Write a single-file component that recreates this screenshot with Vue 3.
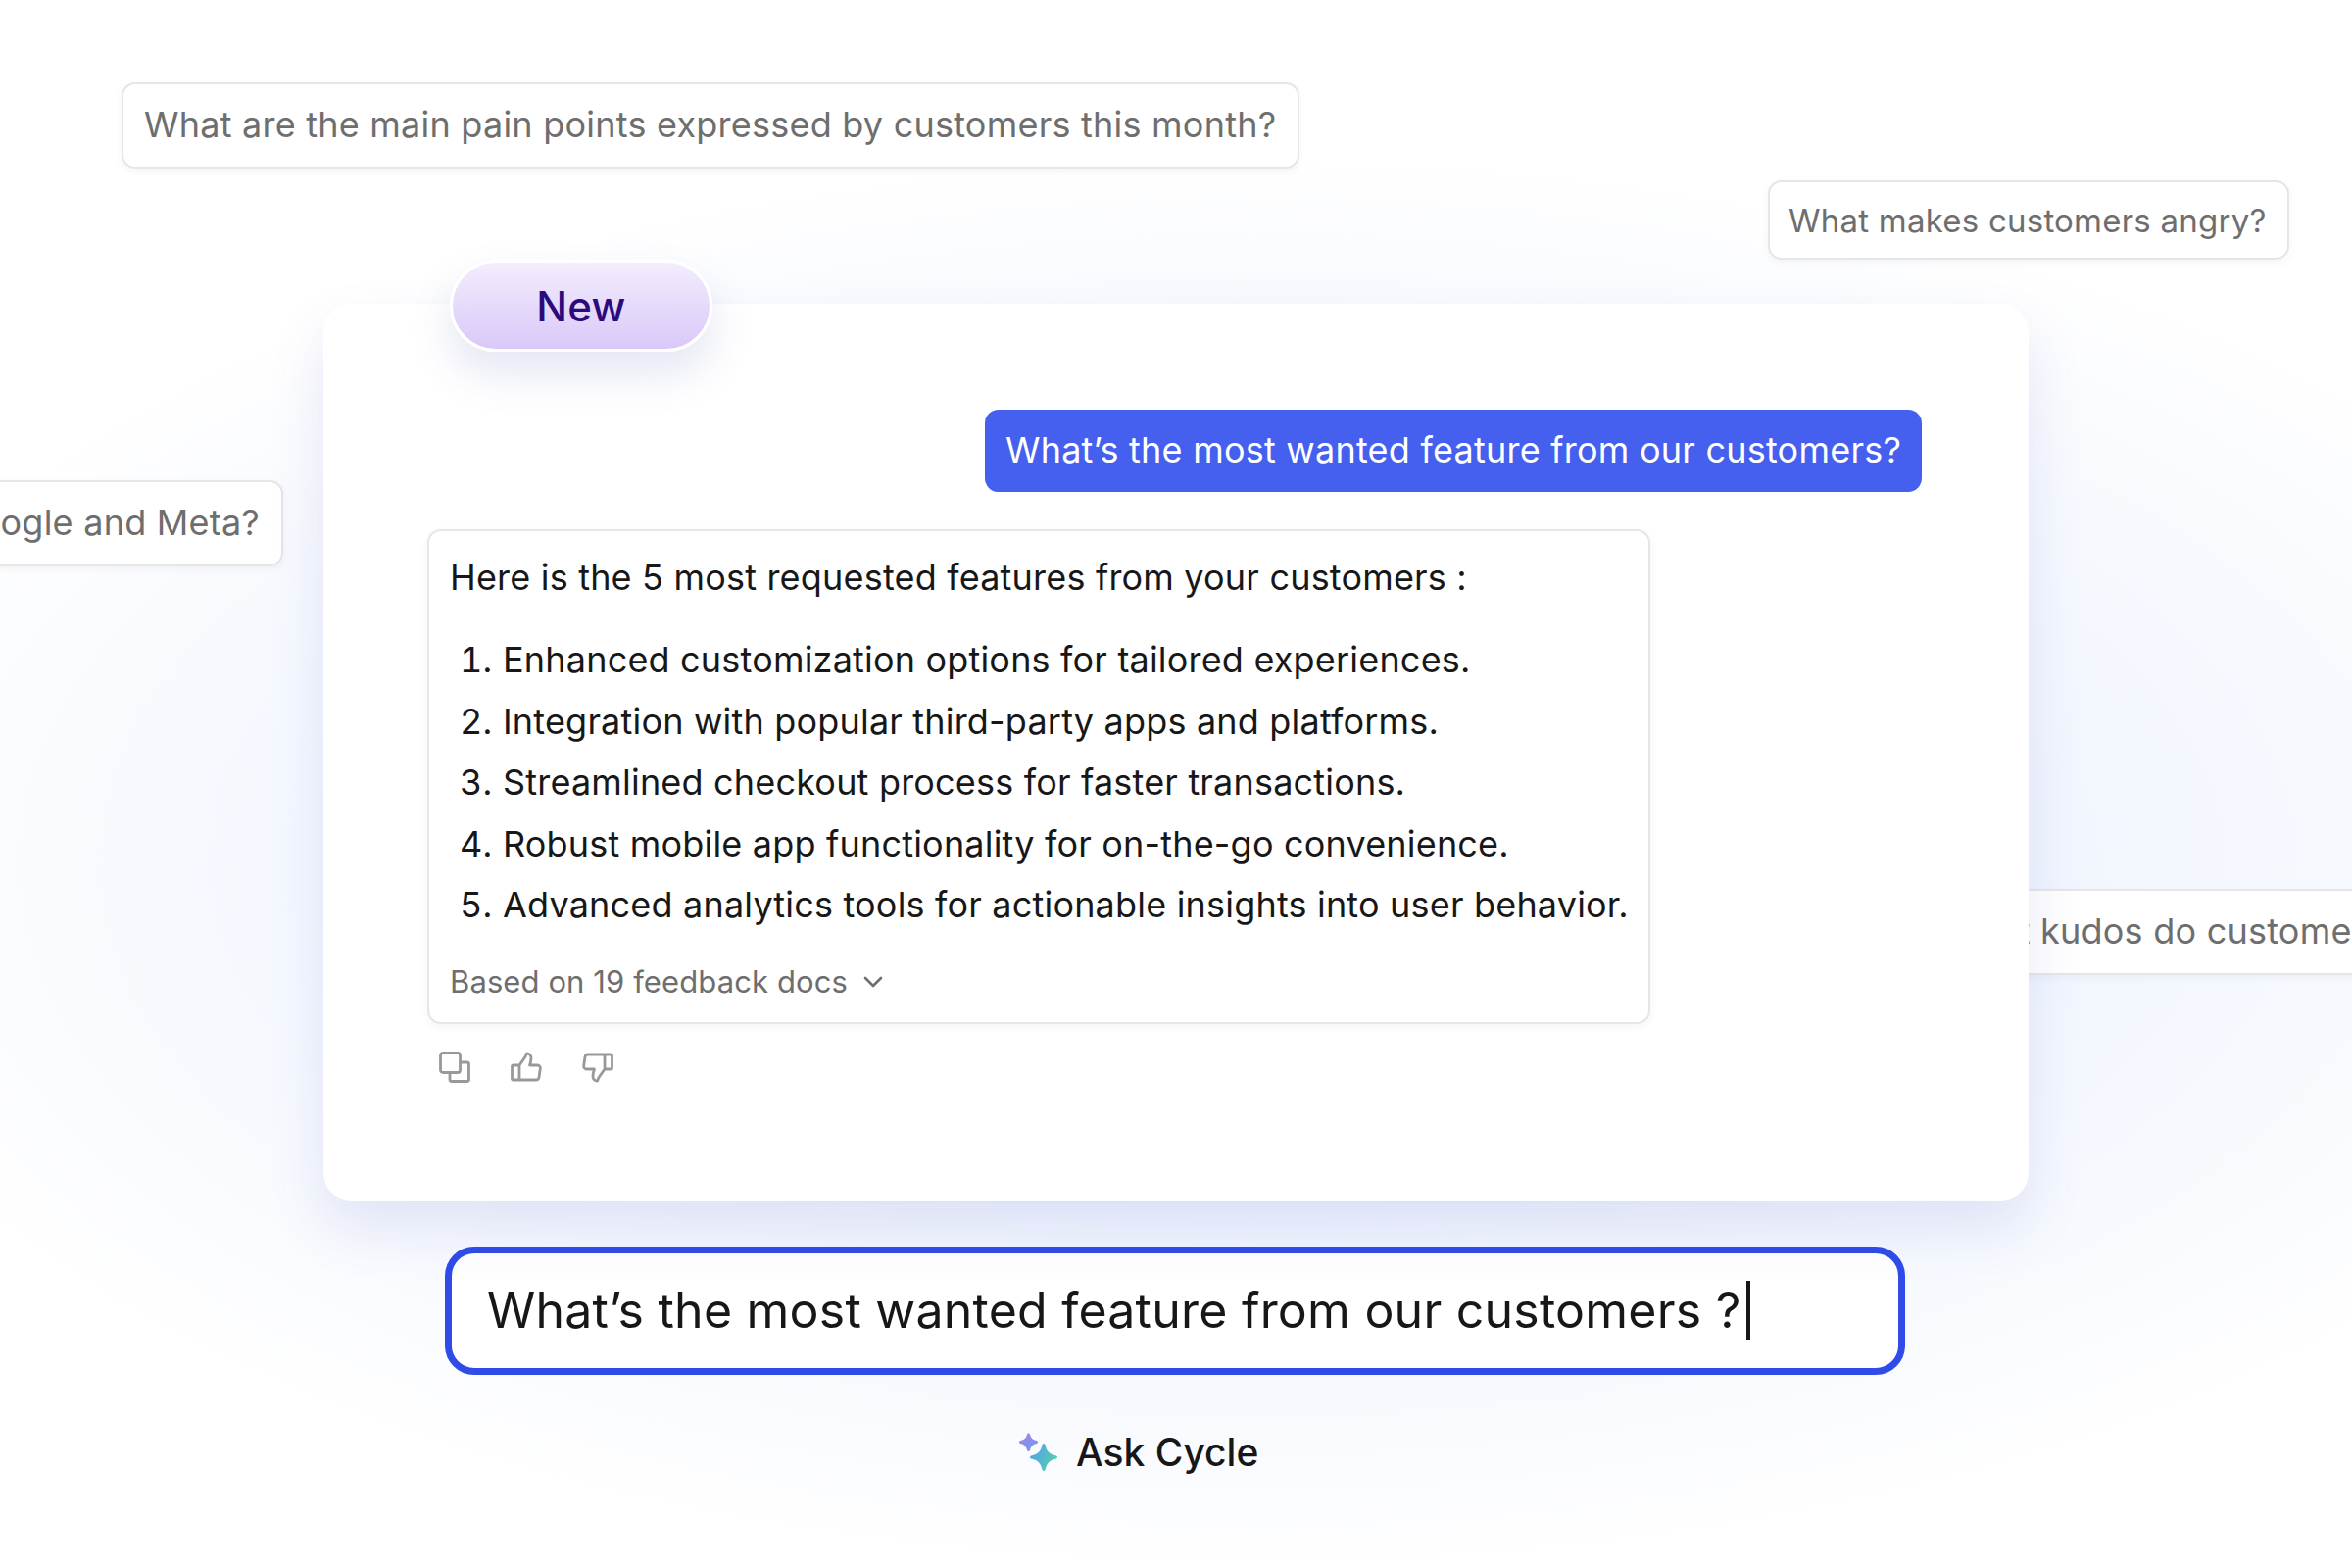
<script setup>
const features = [
  'Enhanced customization options for tailored experiences.',
  'Integration with popular third-party apps and platforms.',
  'Streamlined checkout process for faster transactions.',
  'Robust mobile app functionality for on-the-go convenience.',
  'Advanced analytics tools for actionable insights into user behavior.',
]
</script>

<template>
  <div class="stage">
    <div class="glow"></div>
    <div class="chip chip-a">What are the main pain points expressed by customers this month?</div>
    <div class="chip chip-b">What makes customers angry?</div>
    <div class="chip chip-c"><span>What do customers say about Google and Meta?</span></div>
    <div class="chip chip-d">What kudos do customers give us?</div>

    <main class="column">
      <section class="card">
        <div class="pill">New</div>
        <div class="question"><span>What’s the most wanted feature from our customers?</span></div>
        <div class="answer">
          <p class="lead">Here is the 5 most requested features from your customers :</p>
          <ol class="list">
            <li v-for="(item, i) in features" :key="i">
              <span class="num">{{ i + 1 }}.</span><span>{{ item }}</span>
            </li>
          </ol>
          <div class="source">
            Based on 19 feedback docs
            <svg class="chev" viewBox="0 0 20 12" width="20" height="12" fill="none" stroke="#6f6f6f" stroke-width="2.600" stroke-linecap="round" stroke-linejoin="round"><path d="M2 2l8 8 8-8"/></svg>
          </div>
        </div>
        <div class="actions">
          <svg viewBox="0 0 32 32" width="32" height="32" fill="none" stroke="#999" stroke-width="2.800" stroke-linejoin="round"><rect x="1.500" y="1.500" width="20" height="20" rx="2.500"/><path d="M21.500 11h7a2 2 0 0 1 2 2v15.500a2 2 0 0 1-2 2H13a2 2 0 0 1-2-2v-7"/></svg>
          <svg viewBox="0 0 32 32" width="32" height="32" fill="none" stroke="#999" stroke-width="2.800" stroke-linejoin="round" stroke-linecap="round"><path d="M9 14v15H3a1.500 1.500 0 0 1-1.500-1.500v-12A1.500 1.500 0 0 1 3 14h6zM9 14l6-8.500 1.500-3.500c2.500 0 4.500 2 4.500 4.500 0 2.500-.5 5-1.500 7.500h8c2 0 3 1.500 2.800 3.500l-1.300 9c-.3 1.500-1.300 2.500-3 2.500H9"/></svg>
          <svg viewBox="0 0 32 32" width="32" height="32" fill="none" stroke="#999" stroke-width="2.800" stroke-linejoin="round" stroke-linecap="round"><path d="M23 18V3h6a1.500 1.500 0 0 1 1.500 1.500v12A1.500 1.500 0 0 1 29 18h-6zM23 18l-6 8.500L15.500 30c-2.500 0-4.500-2-4.500-4.500 0-2.500.5-5 1.500-7.500h-8c-2 0-3-1.500-2.800-3.500l1.300-9C3.300 4 4.300 3 6 3h17"/></svg>
        </div>
      </section>

      <div class="input"><span>What’s the most wanted feature from our customers ?</span><i class="caret"></i></div>

      <div class="ask">
        <svg viewBox="0 0 44 44" width="44" height="44">
          <defs>
            <linearGradient id="sparkle-small" x1="0" y1="0" x2="1" y2="1"><stop offset="0" stop-color="#a184ee"/><stop offset="1" stop-color="#6f9be6"/></linearGradient>
            <linearGradient id="sparkle-big" x1="0" y1="0.3" x2="1" y2="0.7"><stop offset="0" stop-color="#54a3e4"/><stop offset="1" stop-color="#56d0ae"/></linearGradient>
          </defs>
          <path fill="url(#sparkle-small)" stroke="url(#sparkle-small)" stroke-width="3" stroke-linejoin="round" d="M13.500 4Q14.800 10.200 21.500 11.500Q14.800 12.800 13.500 19.500Q12.200 12.800 5.500 11.500Q12.200 10.200 13.500 4z"/>
          <path fill="url(#sparkle-big)" stroke="url(#sparkle-big)" stroke-width="3" stroke-linejoin="round" d="M29 14.500Q30.800 25.200 41.500 27Q30.800 28.800 29 39.500Q27.200 28.800 16.500 27Q27.200 25.200 29 14.500z"/>
        </svg>
        <span>Ask Cycle</span>
      </div>
    </main>
  </div>
</template>

<style>
html, body { margin: 0; background: #fff; }
</style>

<style scoped>
.stage {
  position: relative;
  width: 2400px;
  height: 1600px;
  overflow: hidden;
  background: #fff;
  font-family: Inter, "Noto Sans", sans-serif;
  letter-spacing: 0.23px;
  color: #171717;
}
.glow {
  position: absolute;
  left: 0;
  top: 0;
  width: 2400px;
  height: 1600px;
  background: radial-gradient(ellipse 1500px 720px at 1280px 880px, #e8eefc 0%, #f0f5fe 50%, #f8fafe 80%, #ffffff 100%);
}
.chip {
  position: absolute;
  box-sizing: border-box;
  display: flex;
  align-items: center;
  padding: 0 22px 2px 21px;
  background: #fff;
  border: 2px solid #e6e6e8;
  border-radius: 14px;
  color: #6e6e6e;
  white-space: nowrap;
  box-shadow: 0 3px 8px rgba(40, 50, 90, 0.05);
}
.chip-a { left: 124px; top: 84px; height: 88px; font-size: 36px; }
.chip-b { left: 1804px; top: 184px; height: 81px; padding: 0 21px 0 19px; font-size: 33px; }
.chip-c { right: 2111px; top: 490px; height: 88px; font-size: 36px; }
.chip-d { left: 1959px; top: 907px; height: 88px; font-size: 36px; }

.column {
  position: relative;
  display: flex;
  flex-direction: column;
  padding: 310px 0 0 330px;
}
.card {
  position: relative;
  box-sizing: border-box;
  width: 1740px;
  height: 915px;
  padding: 108px 0 0 106px;
  background: #fff;
  border-radius: 28px;
  box-shadow: 0 28px 56px rgba(90, 100, 200, 0.14);
}
.pill {
  position: absolute;
  left: 129px;
  top: -45px;
  box-sizing: border-box;
  width: 268px;
  height: 94px;
  display: flex;
  align-items: center;
  justify-content: center;
  border: 3px solid #fff;
  border-radius: 47px;
  background: linear-gradient(180deg, #f3edfd 0%, #d9c8f8 100%);
  color: #2d0a7c;
  font-size: 42px;
  font-weight: 500;
  box-shadow: 0 22px 44px rgba(90, 100, 180, 0.16);
}
.question {
  box-sizing: border-box;
  width: 956px;
  height: 84px;
  margin-left: 569px;
  padding-bottom: 2px;
  display: flex;
  align-items: center;
  justify-content: center;
  background: #4560ee;
  border-radius: 14px;
  color: #fff;
  font-size: 36px;
  white-space: nowrap;
}
.answer {
  box-sizing: border-box;
  width: 1248px;
  height: 505px;
  margin-top: 38px;
  padding: 24px 21px 0;
  background: #fff;
  border: 2px solid #e6e6e8;
  border-radius: 14px;
  box-shadow: 0 3px 8px rgba(40, 50, 90, 0.05);
  font-size: 36px;
  letter-spacing: 0.19px;
  white-space: nowrap;
}
.lead { margin: 0; height: 46px; line-height: 46px; }
.list { list-style: none; margin: 0; padding: 38px 0 0; display: flex; flex-direction: column; gap: 16.5px; }
.list li { display: flex; height: 46px; line-height: 46px; }
.num { flex: none; width: 54px; padding-left: 10px; box-sizing: border-box; font-feature-settings: "tnum"; }
.source {
  display: flex;
  align-items: center;
  gap: 16px;
  margin-top: 37px;
  color: #6e6e6e;
  font-size: 31px;
  letter-spacing: 0.1px;
}
.actions { display: flex; gap: 41px; margin: 28px 0 0 12px; }
.input {
  box-sizing: border-box;
  display: flex;
  align-items: center;
  width: 1490px;
  height: 131px;
  margin: 47px 0 0 124px;
  padding: 0 0 2px 36px;
  background: #fff;
  border: 7px solid #2f4be8;
  border-radius: 30px;
  font-size: 50px;
  white-space: nowrap;
}
.caret { display: block; width: 4px; height: 60px; margin-left: 6px; background: #171717; }
.ask {
  display: flex;
  align-items: center;
  gap: 18px;
  margin: 55px 0 0 706px;
  font-size: 39px;
  font-weight: 500;
  letter-spacing: 0;
}
</style>
